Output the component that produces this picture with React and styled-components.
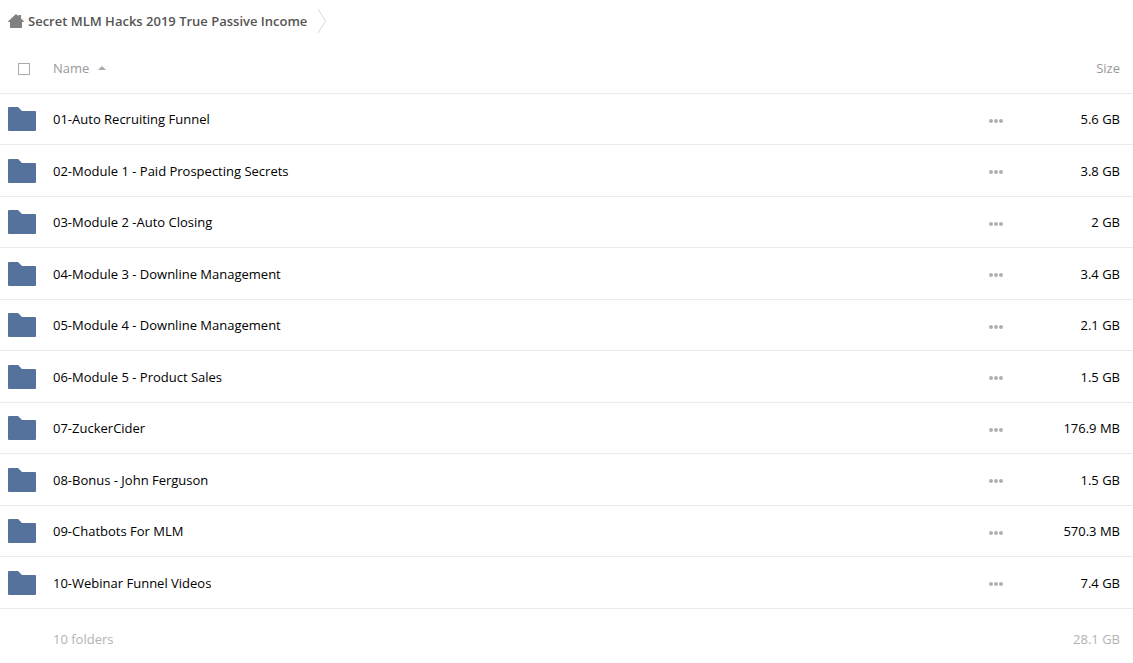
import styled, { createGlobalStyle } from 'styled-components';
import { useState } from 'react';

const folders = [
    { name: '01-Auto Recruiting Funnel', size: '5.6 GB' },
    { name: '02-Module 1 - Paid Prospecting Secrets', size: '3.8 GB' },
    { name: '03-Module 2 -Auto Closing', size: '2 GB' },
    { name: '04-Module 3 - Downline Management', size: '3.4 GB' },
    { name: '05-Module 4 - Downline Management', size: '2.1 GB' },
    { name: '06-Module 5 - Product Sales', size: '1.5 GB' },
    { name: '07-ZuckerCider', size: '176.9 MB' },
    { name: '08-Bonus - John Ferguson', size: '1.5 GB' },
    { name: '09-Chatbots For MLM', size: '570.3 MB' },
    { name: '10-Webinar Funnel Videos', size: '7.4 GB' },
];

export default function App() {
    const [checked, setChecked] = useState(false);
    const [reversed, setReversed] = useState(false);
    const rows = reversed ? [...folders].reverse() : folders;

    return (
        <>
            <GlobalStyle />
            <Breadcrumbs aria-label="Breadcrumb">
                <Crumb href="#">
                    <HomeIcon />
                    Secret MLM Hacks 2019 True Passive Income
                </Crumb>
                <CrumbArrow />
            </Breadcrumbs>
            <FileTable>
                <thead>
                    <tr>
                        <IconHead>
                            <Checkbox
                                type="checkbox"
                                aria-label="Select all"
                                checked={checked}
                                onChange={(e) => setChecked(e.target.checked)}
                            />
                        </IconHead>
                        <NameHead>
                            <SortButton onClick={() => setReversed(!reversed)}>
                                Name
                                <SortArrow $down={reversed} />
                            </SortButton>
                        </NameHead>
                        <ActionsHead />
                        <SizeHead>Size</SizeHead>
                    </tr>
                </thead>
                <tbody>
                    {rows.map((folder) => (
                        <FileRow key={folder.name}>
                            <IconCell>
                                <FolderIcon />
                            </IconCell>
                            <td>
                                <FileLink href="#">{folder.name}</FileLink>
                            </td>
                            <ActionsCell>
                                <MoreButton aria-label={`Actions for ${folder.name}`}>
                                    <DotsIcon />
                                </MoreButton>
                            </ActionsCell>
                            <SizeCell>{folder.size}</SizeCell>
                        </FileRow>
                    ))}
                </tbody>
                <tfoot>
                    <SummaryRow>
                        <td />
                        <td>10 folders</td>
                        <td />
                        <SizeCell>28.1 GB</SizeCell>
                    </SummaryRow>
                </tfoot>
            </FileTable>
        </>
    );
}

function HomeIcon() {
    return (
        <svg width="16" height="15" viewBox="0 0 16 15" fill="#808080" aria-hidden="true">
            <path d="M8 0 L10.5 2.3 V1 H13 V4.6 L16 7.5 V8 H14 V14 H2 V8 H0 V7.5 Z" />
        </svg>
    );
}

function CrumbArrow() {
    return (
        <svg width="10" height="26" viewBox="0 0 10 26" fill="none" aria-hidden="true">
            <path d="M1 1 L8.5 13 L1 25" stroke="#d9d9d9" />
        </svg>
    );
}

function FolderIcon() {
    return (
        <svg width="28" height="24" viewBox="0 0 28 24" fill="#54729b" aria-hidden="true">
            <path d="M0 1 Q0 0 1 0 H10 L14 4 H27 Q28 4 28 5 V23 Q28 24 27 24 H1 Q0 24 0 23 Z" />
        </svg>
    );
}

function DotsIcon() {
    return (
        <svg width="14" height="4" viewBox="0 0 14 4" fill="#b0b0b0" aria-hidden="true">
            <circle cx="2" cy="2" r="2" />
            <circle cx="7" cy="2" r="2" />
            <circle cx="12" cy="2" r="2" />
        </svg>
    );
}

const GlobalStyle = createGlobalStyle`
    * {
        box-sizing: border-box;
    }

    body {
        margin: 0;
        background: #fff;
        color: #000;
        font-family: 'Open Sans', 'Liberation Sans', sans-serif;
        font-size: 13px;
        line-height: 18px;
    }

    svg {
        display: block;
    }
`;

const Breadcrumbs = styled.nav`
    display: flex;
    align-items: center;
    gap: 10px;
    height: 42px;
    padding: 0 8px;
`;

const Crumb = styled.a`
    display: flex;
    align-items: center;
    gap: 4px;
    color: #555;
    font-weight: 600;
    text-decoration: none;
`;

const FileTable = styled.table`
    width: 100%;
    table-layout: fixed;
    border-collapse: separate;
    border-spacing: 0;

    th,
    td {
        padding: 0;
        vertical-align: middle;
        text-align: left;
    }
`;

const HeadCell = styled.th`
    height: 52px;
    border-bottom: 1px solid #ebebeb;
    color: #999;
    font-weight: 400;
`;

const IconHead = styled(HeadCell)`
    width: 53px;

    && {
        padding-top: 2px;
    }
`;

const NameHead = styled(HeadCell)`
    width: auto;
`;

const ActionsHead = styled(HeadCell).attrs({ as: 'td' })`
    width: 40px;
`;

const SizeHead = styled(HeadCell)`
    width: 117px;

    && {
        padding-right: 13px;
        text-align: right;
    }
`;

const Checkbox = styled.input`
    display: block;
    appearance: none;
    width: 12px;
    height: 12px;
    margin: 0 0 0 18px;
    border: 1px solid #aaa;
    background: #fff;

    &:checked {
        background: #54729b;
    }
`;

const SortButton = styled.button`
    display: flex;
    align-items: center;
    gap: 9px;
    padding: 0;
    border: 0;
    background: none;
    color: inherit;
    font: inherit;
    cursor: pointer;
`;

const SortArrow = styled.span`
    border: 4px solid transparent;
    border-top-width: 0;
    border-bottom-color: #aaa;
    transform: ${(props) => (props.$down ? 'rotate(180deg)' : 'none')};
`;

const FileRow = styled.tr`
    td {
        height: 51px;
        border-bottom: 1px solid #ebebeb;
    }

    &:nth-child(even) td {
        height: 52px;
    }
`;

const IconCell = styled.td`
    && {
        padding-left: 8px;
    }
`;

const FileLink = styled.a`
    color: #000;
    text-decoration: none;
`;

const ActionsCell = styled.td`
    && {
        padding-top: 3px;
    }
`;

const MoreButton = styled.button`
    display: flex;
    align-items: center;
    justify-content: center;
    width: 40px;
    height: 24px;
    padding: 0;
    border: 0;
    background: none;
    cursor: pointer;
`;

const SizeCell = styled.td`
    && {
        padding-right: 13px;
        text-align: right;
    }
`;

const SummaryRow = styled.tr`
    color: #b3b3b3;

    && td {
        padding-top: 21px;
        padding-bottom: 12px;
    }
`;
